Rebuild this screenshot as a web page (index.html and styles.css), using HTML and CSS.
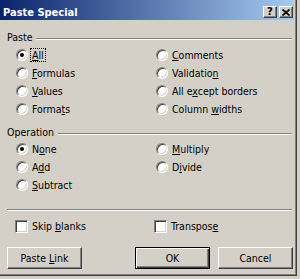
FILE: index.html
```html
<!DOCTYPE html>
<html lang="en">
<head>
  <meta charset="UTF-8" />
  <title>Paste Special</title>
  <link rel="stylesheet" href="styles.css">
</head>
<body>
  <div class="window" role="dialog" aria-label="Paste Special">
    <div class="frame">
      <div class="titlebar">
        <span class="title">Paste Special</span>
        <button class="cap-btn help" title="Help">?</button>
        <button class="cap-btn close" title="Close">
          <svg width="8" height="7" viewBox="0 0 8 7"><path d="M0.5 0.5 L7.5 6.5 M7.5 0.5 L0.5 6.5" stroke="#000" stroke-width="1.7" fill="none"/></svg>
        </button>
      </div>

      <div class="content">
        <!-- Paste group -->
        <div class="legend"><span>Paste</span><i class="etch"></i></div>
        <div class="options">
          <label class="opt"><span class="radio checked"></span><span class="focus"><u>A</u>ll</span></label>
          <label class="opt"><span class="radio"></span><span><u>C</u>omments</span></label>
          <label class="opt"><span class="radio"></span><span><u>F</u>ormulas</span></label>
          <label class="opt"><span class="radio"></span><span>Validatio<u>n</u></span></label>
          <label class="opt"><span class="radio"></span><span><u>V</u>alues</span></label>
          <label class="opt"><span class="radio"></span><span>All e<u>x</u>cept borders</span></label>
          <label class="opt"><span class="radio"></span><span>Forma<u>t</u>s</span></label>
          <label class="opt"><span class="radio"></span><span>Column <u>w</u>idths</span></label>
        </div>

        <!-- Operation group -->
        <div class="legend op"><span>Operation</span><i class="etch"></i></div>
        <div class="options">
          <label class="opt"><span class="radio checked"></span><span>N<u>o</u>ne</span></label>
          <label class="opt"><span class="radio"></span><span><u>M</u>ultiply</span></label>
          <label class="opt"><span class="radio"></span><span>A<u>d</u>d</span></label>
          <label class="opt"><span class="radio"></span><span>D<u>i</u>vide</span></label>
          <label class="opt"><span class="radio"></span><span><u>S</u>ubtract</span></label>
        </div>

        <i class="etch sep"></i>

        <div class="checks">
          <label class="opt"><span class="check"></span><span>Skip <u>b</u>lanks</span></label>
          <label class="opt"><span class="check"></span><span>Transpos<u>e</u></span></label>
        </div>

        <div class="buttons">
          <button class="btn">Paste <u>L</u>ink</button>
          <button class="btn default">OK</button>
          <button class="btn">Cancel</button>
        </div>
      </div>
    </div>
  </div>
</body>
</html>
```

FILE: styles.css
```css
body {
  margin: 0;
  background: #d4d0c8;
  font-family: "DejaVu Sans Condensed", "DejaVu Sans", sans-serif;
  font-size: 10.5px;
  color: #000;
}
.window {
  width: 297px;
  height: 276px;
  box-sizing: border-box;
  border-right: 1px solid #404040;
  border-bottom: 1px solid #404040;
}
.frame {
  height: 100%;
  box-sizing: border-box;
  border-right: 1px solid #808080;
  border-bottom: 1px solid #808080;
  padding-right: 1px;
}
.titlebar {
  height: 20px;
  box-sizing: border-box;
  padding: 4px 1px 0 3px;
  display: flex;
  align-items: center;
  background: linear-gradient(90deg, #0a246a, #a6caf0);
}
.title {
  color: #fff;
  font-weight: bold;
  font-size: 11px;
}
.cap-btn {
  width: 14px;
  height: 12px;
  padding: 0;
  box-sizing: border-box;
  background: #d4d0c8;
  border: 1px solid;
  border-color: #fff #404040 #404040 #fff;
  box-shadow: inset -1px -1px 0 #808080;
  display: flex;
  align-items: center;
  justify-content: center;
  font-family: "DejaVu Sans", sans-serif;
  font-weight: bold;
  font-size: 10px;
  line-height: 1;
  color: #000;
}
.cap-btn.help {
  margin-left: auto;
}
.cap-btn.close {
  margin-left: 2px;
}
.content {
  padding: 8px 2px 0 7px;
}
.legend {
  height: 18px;
  display: flex;
  align-items: center;
  gap: 4px;
}
.legend.op {
  height: 16px;
  margin-top: 6px;
}
.etch {
  display: block;
  flex: 1;
  height: 0;
  border-top: 1px solid #808080;
  border-bottom: 1px solid #fff;
  margin-top: 3px;
}
.etch.sep {
  margin-top: 15px;
}
.options {
  display: grid;
  grid-template-columns: 140px 1fr;
  padding-left: 9px;
}
.checks {
  display: grid;
  grid-template-columns: 139px 1fr;
  padding-left: 8px;
  margin-top: 6px;
}
.opt {
  height: 18px;
  display: flex;
  align-items: center;
  gap: 4px;
}
.radio {
  position: relative;
  flex: none;
  width: 12px;
  height: 12px;
  box-sizing: border-box;
  border-radius: 50%;
  background: #fff;
  border: 1px solid;
  border-color: #808080 #fff #fff #808080;
  box-shadow: inset 1px 1px 0 #404040, inset -1px -1px 0 #d4d0c8;
}
.radio.checked::after {
  content: "";
  position: absolute;
  left: 3px;
  top: 3px;
  width: 4px;
  height: 4px;
  border-radius: 50%;
  background: #000;
}
.check {
  flex: none;
  width: 13px;
  height: 13px;
  box-sizing: border-box;
  background: #fff;
  border: 1px solid;
  border-color: #808080 #fff #fff #808080;
  box-shadow: inset 1px 1px 0 #404040, inset -1px -1px 0 #d4d0c8;
}
.focus {
  outline: 1px dotted #000;
  outline-offset: 0;
  padding: 0 1px;
  margin-left: -1px;
}
.buttons {
  display: flex;
  margin-top: 12px;
}
.btn {
  width: 75px;
  height: 22px;
  padding: 0;
  box-sizing: border-box;
  background: #d4d0c8;
  font-family: inherit;
  font-size: 10.5px;
  color: #000;
  border: 1px solid;
  border-color: #fff #404040 #404040 #fff;
  box-shadow: inset -1px -1px 0 #808080;
}
.btn.default {
  margin-left: auto;
  border-color: #000;
  box-shadow: inset 1px 1px 0 #fff, inset -1px -1px 0 #404040, inset -2px -2px 0 #808080;
}
.btn.default + .btn {
  margin-left: 8px;
  margin-right: -1px;
}
```
